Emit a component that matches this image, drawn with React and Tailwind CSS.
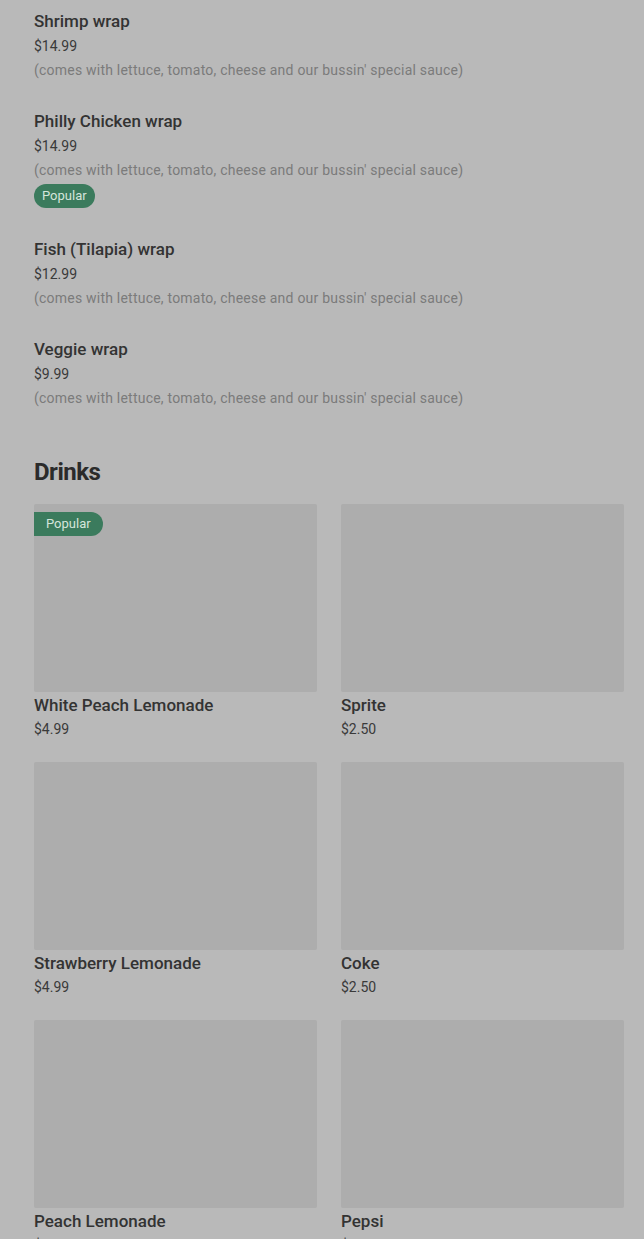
const wraps = [
  { name: "Shrimp wrap", price: "$14.99" },
  { name: "Philly Chicken wrap", price: "$14.99", popular: true },
  { name: "Fish (Tilapia) wrap", price: "$12.99" },
  { name: "Veggie wrap", price: "$9.99" },
];

const drinks = [
  { name: "White Peach Lemonade", price: "$4.99", popular: true },
  { name: "Sprite", price: "$2.50" },
  { name: "Strawberry Lemonade", price: "$4.99" },
  { name: "Coke", price: "$2.50" },
  { name: "Peach Lemonade", price: "$4.99" },
  { name: "Pepsi", price: "$2.50" },
];

const desc = "(comes with lettuce, tomato, cheese and our bussin' special sauce)";

const App = () => {
  return (
    <div className="min-h-screen bg-[#b9b9b9] pl-[34px] pr-[20px] pt-[9px] font-['Roboto',sans-serif] text-[#333333]">
      <div className="flex flex-col gap-[27px]">
        {wraps.map((item, idx) => (
          <div key={idx} className="flex flex-col">
            <h3 className="text-[17px] leading-[24px] font-medium">{item.name}</h3>
            <p className="mt-[2px] text-[14px] leading-[23px] text-[#3a3a3a]">{item.price}</p>
            <p className="text-[14px] leading-[24px] text-[#7b7b7b] tracking-[0.22px]">{desc}</p>
            {item.popular && (
              <div className="mt-[2px] mb-[2px] flex">
                <span className="bg-[#3b7b5d] text-[#d5e5db] text-[13px] leading-[24px] px-[8px] rounded-full">
                  Popular
                </span>
              </div>
            )}
          </div>
        ))}
      </div>
      <h2 className="mt-[46px] text-[24px] leading-[32px] font-bold tracking-[-0.5px] text-[#2b2b2b]">
        Drinks
      </h2>
      <div className="mt-[16px] grid grid-cols-2 gap-x-[24px] gap-y-[21px]">
        {drinks.map((item, idx) => (
          <div key={idx} className="flex flex-col">
            <div className="relative h-[188px] bg-[#adadad] rounded-[2px]">
              {item.popular && (
                <span className="absolute left-0 top-[8px] bg-[#3b7b5d] text-[#d5e5db] text-[13px] leading-[24px] px-[12px] rounded-r-full">
                  Popular
                </span>
              )}
            </div>
            <h3 className="mt-[1px] text-[17px] leading-[24px] font-medium">{item.name}</h3>
            <p className="text-[14px] leading-[24px] text-[#3a3a3a]">{item.price}</p>
          </div>
        ))}
      </div>
    </div>
  );
};

export default App;
